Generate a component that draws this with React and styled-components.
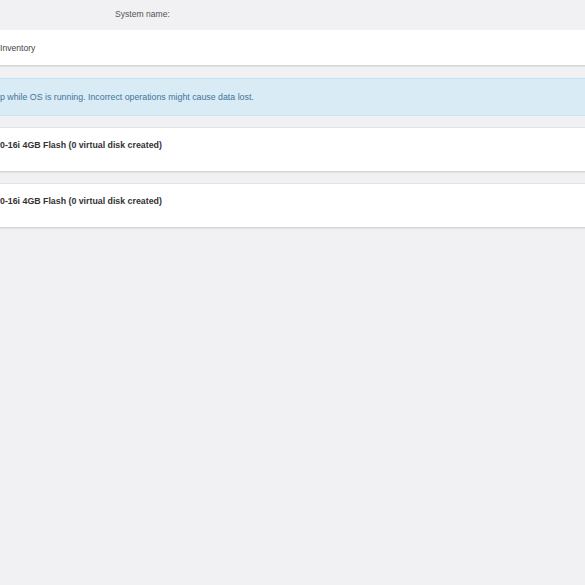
import React from "react";
import styled, { createGlobalStyle } from "styled-components";

const Global = createGlobalStyle`
  html, body { margin: 0; padding: 0; background: #f1f1f3; }
  body { font-family: "Liberation Sans", Arial, sans-serif; width: 585px; height: 585px; overflow: hidden; }
`;

const Page = styled.div`
  display: flex;
  flex-direction: column;
  width: 585px;
  min-height: 585px;
  background: #f1f1f3;
`;

const Header = styled.div`
  height: 30px;
  display: flex;
  align-items: center;
  padding-left: 115px;
  font-size: 8.6px;
  color: #555;
  box-sizing: border-box;
  padding-bottom: 2px;
`;

const Card = styled.div`
  background: #fff;
  height: ${(p) => p.$h}px;
  box-sizing: border-box;
  border-top: ${(p) => (p.$top ? "1px solid #e4e4e6" : "none")};
  box-shadow: 0 1px 0 #d6d6d8, 0 2px 1px rgba(0,0,0,0.06);
  margin-bottom: ${(p) => p.$mb}px;
  display: flex;
  align-items: ${(p) => (p.$center ? "center" : "flex-start")};
  padding-top: ${(p) => p.$pt || 0}px;
  font-size: ${(p) => (p.$bold ? 8.8 : 8.6)}px;
  color: ${(p) => (p.$bold ? "#333" : "#444")};
  font-weight: ${(p) => (p.$bold ? "bold" : "normal")};
  white-space: nowrap;
`;

const Alert = styled.div`
  height: 38px;
  box-sizing: border-box;
  background: #d9ebf5;
  border-top: 1px solid #c4e3f1;
  border-bottom: 1px solid #cfe6f2;
  display: flex;
  align-items: center;
  font-size: 8.8px;
  color: #3f7599;
  margin-bottom: 11px;
  white-space: nowrap;
`;

export default function App() {
  return (
    <>
      <Global />
      <Page>
        <Header>System name:</Header>
        <Card $h={35} $mb={13} $center>Inventory</Card>
        <Alert>p while OS is running. Incorrect operations might cause data lost.</Alert>
        <Card $h={44} $mb={12} $top $bold $pt={12}>0-16i 4GB Flash (0 virtual disk created)</Card>
        <Card $h={44} $mb={0} $top $bold $pt={12}>0-16i 4GB Flash (0 virtual disk created)</Card>
      </Page>
    </>
  );
}
